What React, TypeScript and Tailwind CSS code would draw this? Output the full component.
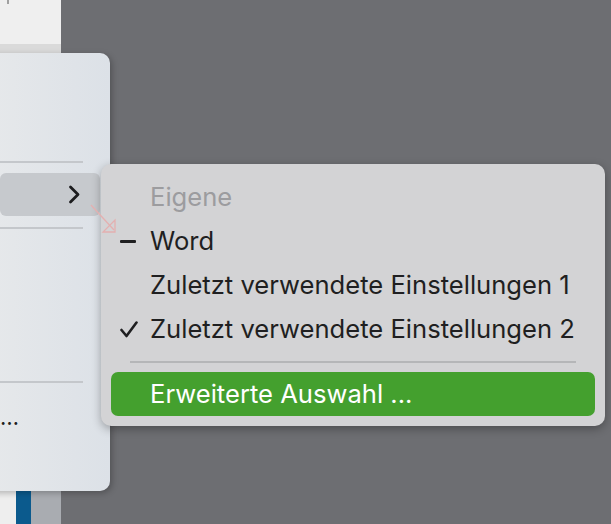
import React from 'react';

const ff = { fontFamily: 'Inter, "Noto Sans", sans-serif' };

const Check = () => (
  <svg width="18" height="17" viewBox="0 0 18 17" fill="none">
    <path d="M1.5 9 L6.5 15 L16.5 1.5" stroke="#1f1f21" strokeWidth="2.6" strokeLinecap="round" strokeLinejoin="round" />
  </svg>
);

const Dash = () => <div className="w-[16px] h-[3px] bg-[#1f1f21] rounded-[1px]" />;

const Row: React.FC<{ icon?: React.ReactNode; muted?: boolean; children: React.ReactNode }> = ({ icon, muted, children }) => (
  <div className="h-[44px] flex items-center">
    <div className="w-[39px] pl-[9px] flex items-center">{icon}</div>
    <span className={muted ? 'text-[#9c9c9f]' : 'text-[#1f1f21]'}>{children}</span>
  </div>
);

export default function App() {
  return (
    <div className="relative w-[611px] h-[524px] overflow-hidden bg-[#6d6e72] flex" style={ff}>
      {/* app window behind */}
      <div className="w-[61px] h-full flex flex-col">
        <div className="h-[44px] bg-[#efefef] relative">
          <div className="absolute left-[7px] top-0 w-[2px] h-[4px] bg-[#a0a0a0]" />
        </div>
        <div className="h-[10px] bg-[#dadada]" />
        <div className="flex-1 bg-[#e4e6e8]" />
        <div className="h-[33px] flex">
          <div className="w-[16px] bg-[#eeeeee]" />
          <div className="w-[15px] bg-[#0b5a8d]" />
          <div className="flex-1 bg-[#a9acb1]" />
        </div>
      </div>

      {/* first menu */}
      <div className="absolute left-[-20px] top-[53px] w-[130px] h-[438px] rounded-[10px] bg-gradient-to-r from-[#e7e9eb] to-[#dce1e7] shadow-[2px_2px_6px_rgba(0,0,0,0.25)] flex flex-col">
        <div className="h-[108px]" />
        <div className="ml-[20px] mr-[27px] h-[2px] bg-[#c4c7cb]" />
        <div className="h-[10px]" />
        <div className="ml-[20px] mr-[10px] h-[43px] rounded-[6px] bg-[#c6c9cd] flex items-center justify-end pr-[19px]">
          <svg width="13" height="19" viewBox="0 0 13 19" fill="none">
            <path d="M2.5 2 L10 9.5 L2.5 17" stroke="#1c1c1e" strokeWidth="2.8" strokeLinecap="round" strokeLinejoin="round" />
          </svg>
        </div>
        <div className="h-[11px]" />
        <div className="ml-[20px] mr-[27px] h-[2px] bg-[#c4c7cb]" />
        <div className="h-[152px]" />
        <div className="ml-[20px] mr-[27px] h-[2px] bg-[#c4c7cb]" />
        <div className="ml-[20px] pt-[23px] flex">
          <span className="text-[22px] leading-none text-[#1f1f21]">…</span>
        </div>
      </div>

      {/* submenu */}
      <div className="absolute left-[101px] top-[164px] w-[504px] h-[262px] rounded-[10px] bg-[#d3d3d5] shadow-[0_3px_10px_rgba(0,0,0,0.3)] px-[10px] pt-[11px] text-[25.6px] leading-none flex flex-col">
        <Row muted>Eigene</Row>
        <Row icon={<Dash />}>Word</Row>
        <Row>Zuletzt verwendete Einstellungen 1</Row>
        <Row icon={<Check />}>Zuletzt verwendete Einstellungen 2</Row>
        <div className="h-[10px]" />
        <div className="mx-[19px] h-[2px] bg-[#b5b6b8]" />
        <div className="h-[9px]" />
        <div className="h-[44px] rounded-[7px] bg-[#44a02e] flex items-center pl-[39px] text-white">
          Erweiterte Auswahl ...
        </div>
      </div>

      {/* faint pointer trail */}
      <svg className="absolute left-[88px] top-[202px] pointer-events-none" width="32" height="34" viewBox="0 0 32 34" fill="none">
        <path d="M3 3 L26 28" stroke="#e4b0b0" strokeWidth="1.3" />
        <path d="M27 18 L27 30 L15 30 Z" stroke="#e4b0b0" strokeWidth="1.3" fill="none" />
      </svg>
    </div>
  );
}
